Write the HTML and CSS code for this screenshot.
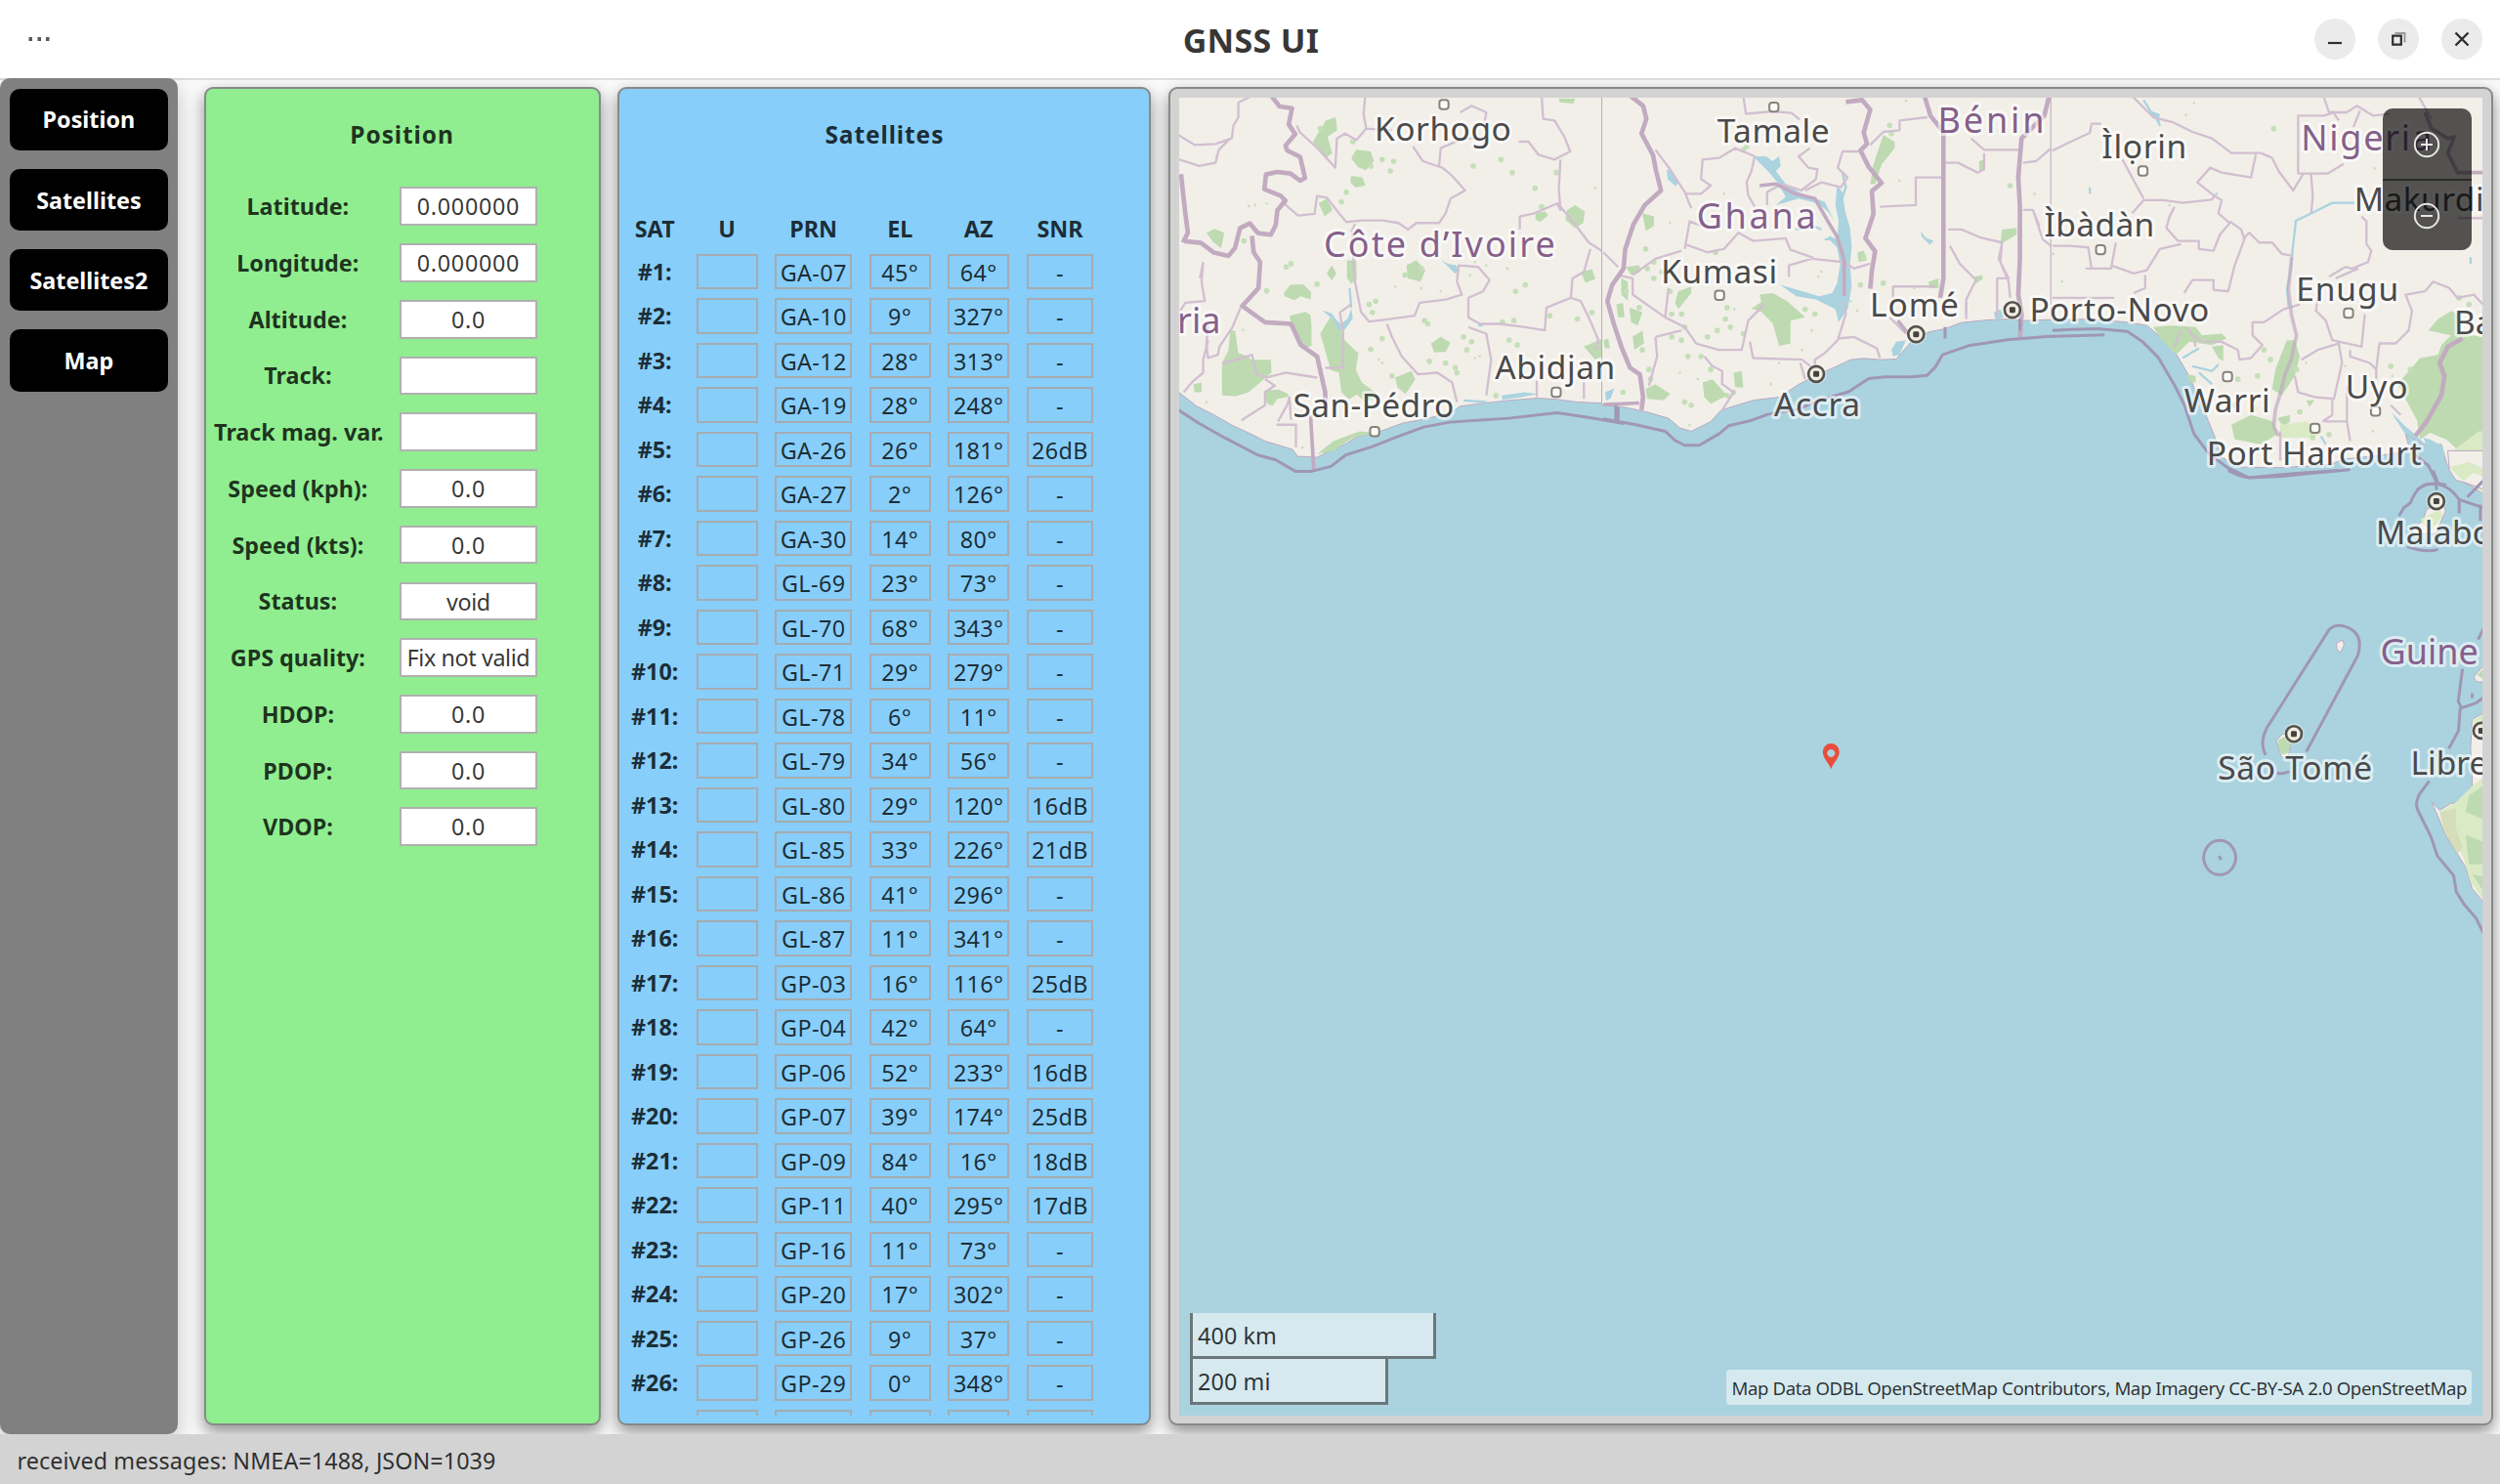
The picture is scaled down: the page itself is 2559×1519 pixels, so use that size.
FILE: index.html
```html
<!DOCTYPE html>
<html lang="en">
<head>
<meta charset="utf-8">
<title>GNSS UI</title>
<link rel="stylesheet" href="styles.css">
</head>
<body>
<header class="titlebar">
  <button class="menu" aria-label="Menu"><svg width="26" height="8" viewBox="0 0 26 8"><path d="M1.500 2h3.500v4H1.500zM10.500 2H14v4h-3.500zM19 2h3.500v4H19z" fill="#5a5a5a"/></svg></button>
  <h1>GNSS UI</h1>
  <div class="controls">
    <button aria-label="Minimize"><svg width="42" height="42"><path d="M14 25h14" stroke="#2f2f2f" stroke-width="2.200"/></svg></button>
    <button aria-label="Restore"><svg width="42" height="42"><path d="M15.200 17.700h8.600v9h-8.600z" fill="none" stroke="#2f2f2f" stroke-width="2.200"/><path d="M17.500 15h10v9.500" fill="none" stroke="#9b9b9b" stroke-width="2"/></svg></button>
    <button aria-label="Close"><svg width="42" height="42"><path d="M14.500 14.500l13 13m0-13l-13 13" stroke="#2f2f2f" stroke-width="2.400"/></svg></button>
  </div>
</header>
<main class="workspace">
  <nav class="sidebar">
    <button>Position</button>
    <button>Satellites</button>
    <button>Satellites2</button>
    <button>Map</button>
  </nav>
  <div class="panels">
    <section class="card position">
      <h2>Position</h2>
      <div class="fields">
        <b>Latitude:</b><span class="num">0.000000</span>
        <b>Longitude:</b><span class="num">0.000000</span>
        <b>Altitude:</b><span class="num">0.0</span>
        <b>Track:</b><span></span>
        <b>Track mag. var.</b><span></span>
        <b>Speed (kph):</b><span class="num">0.0</span>
        <b>Speed (kts):</b><span class="num">0.0</span>
        <b>Status:</b><span>void</span>
        <b>GPS quality:</b><span>Fix not valid</span>
        <b>HDOP:</b><span class="num">0.0</span>
        <b>PDOP:</b><span class="num">0.0</span>
        <b>VDOP:</b><span class="num">0.0</span>
      </div>
    </section>
    <section class="card satellites">
      <h2>Satellites</h2>
      <div class="sat-head"><b>SAT</b><b>U</b><b>PRN</b><b>EL</b><b>AZ</b><b>SNR</b></div>
      <div class="sat-rows">
        <b>#1:</b><i></i><i>GA-07</i><i>45°</i><i>64°</i><i>-</i>
        <b>#2:</b><i></i><i>GA-10</i><i>9°</i><i>327°</i><i>-</i>
        <b>#3:</b><i></i><i>GA-12</i><i>28°</i><i>313°</i><i>-</i>
        <b>#4:</b><i></i><i>GA-19</i><i>28°</i><i>248°</i><i>-</i>
        <b>#5:</b><i></i><i>GA-26</i><i>26°</i><i>181°</i><i>26dB</i>
        <b>#6:</b><i></i><i>GA-27</i><i>2°</i><i>126°</i><i>-</i>
        <b>#7:</b><i></i><i>GA-30</i><i>14°</i><i>80°</i><i>-</i>
        <b>#8:</b><i></i><i>GL-69</i><i>23°</i><i>73°</i><i>-</i>
        <b>#9:</b><i></i><i>GL-70</i><i>68°</i><i>343°</i><i>-</i>
        <b>#10:</b><i></i><i>GL-71</i><i>29°</i><i>279°</i><i>-</i>
        <b>#11:</b><i></i><i>GL-78</i><i>6°</i><i>11°</i><i>-</i>
        <b>#12:</b><i></i><i>GL-79</i><i>34°</i><i>56°</i><i>-</i>
        <b>#13:</b><i></i><i>GL-80</i><i>29°</i><i>120°</i><i>16dB</i>
        <b>#14:</b><i></i><i>GL-85</i><i>33°</i><i>226°</i><i>21dB</i>
        <b>#15:</b><i></i><i>GL-86</i><i>41°</i><i>296°</i><i>-</i>
        <b>#16:</b><i></i><i>GL-87</i><i>11°</i><i>341°</i><i>-</i>
        <b>#17:</b><i></i><i>GP-03</i><i>16°</i><i>116°</i><i>25dB</i>
        <b>#18:</b><i></i><i>GP-04</i><i>42°</i><i>64°</i><i>-</i>
        <b>#19:</b><i></i><i>GP-06</i><i>52°</i><i>233°</i><i>16dB</i>
        <b>#20:</b><i></i><i>GP-07</i><i>39°</i><i>174°</i><i>25dB</i>
        <b>#21:</b><i></i><i>GP-09</i><i>84°</i><i>16°</i><i>18dB</i>
        <b>#22:</b><i></i><i>GP-11</i><i>40°</i><i>295°</i><i>17dB</i>
        <b>#23:</b><i></i><i>GP-16</i><i>11°</i><i>73°</i><i>-</i>
        <b>#24:</b><i></i><i>GP-20</i><i>17°</i><i>302°</i><i>-</i>
        <b>#25:</b><i></i><i>GP-26</i><i>9°</i><i>37°</i><i>-</i>
        <b>#26:</b><i></i><i>GP-29</i><i>0°</i><i>348°</i><i>-</i>
        <b></b><i></i><i></i><i></i><i></i><i></i>
      </div>
    </section>
    <section class="card map-card">
      <div class="map">
        <svg class="chart" viewBox="1205.400 98.300 1335 1349.500" preserveAspectRatio="none">
          <defs>
            <g id="town"><circle r="16" fill="#fff" opacity=".5"/><rect x="-14" y="-14" width="28" height="28" rx="9" fill="#fbfaf7" stroke="#85837a" stroke-width="6"/></g>
            <g id="capital"><circle r="32" fill="#fff" opacity=".35"/><circle r="24" fill="#efece3" stroke="#55534b" stroke-width="8"/><rect x="-9" y="-9" width="18" height="18" rx="4" fill="#45433c"/></g>
          </defs>

          <!-- Côte d'Ivoire and Liberia -->
          <g transform="translate(1180 80) scale(.33333)">
            <path class="land" d="M60 40H1445V1002L1380 994 1300 990 1237 982 1180 978 1090 985 1000 995 940 1003 915 1020 850 1038 760 1056 700 1078 620 1098 590 1118 540 1140 500 1160 440 1157 425 1136 340 1110 290 1085 240 1062 180 1028 130 1003 60 948Z"/>
            <path class="wood" d="M510 780l30-50 30 15 10 50 25 25 22 20-8 50 18 40 45 32-8 20-30 5-22-20-25 15-22-22-8-60-25-8ZM208 870l20-40 5-60 15 0 10 70 30 10 10 10h60l2 40-70 60-40 12-42-2ZM415 725l50-12 15 10 3 40 0 55-30 8-25-50ZM398 655l20-25 40-2 24 25-2 22-30-10-20 12-30-12ZM605 240l15-25 45 5 10 30-25 28-25-10ZM160 470l25-12 30 12-10 48-25-20ZM592 555h28l2 60-18 12-12-18ZM740 915l50-20 12 25-30 45-25-20ZM530 595l15-25 15 25-15 22ZM605 295l35 5 8 25-30 5-16-15ZM338 955l45-3 30 15-5 8-30 5-15 22-18-8ZM505 380l25-15 18 35-25 20ZM1268 400l25-15 30 20-5 35-25 15-30-25ZM775 570l30-15 28 30-15 35-40-10ZM487 190l40-65 30-10 5 40-30 20 15 50-20 15ZM1320 820l70-30 5 50-40 20ZM500 1150l50-40 80-30 50 5-70 15-60 40ZM120 935l25-5 0 30-22 0ZM1310 590l35-8 10 30-30 12ZM850 810l30-20 30 18-15 28-35 2ZM1243 58h50l-5 15-42-4ZM1172 410l30-5 8 12-25 20-14-8Z"/>
            <path class="specks s14" d="M405 575h0M420 565h0M345 648h0M500 628h0M665 265h0M700 245h0M725 280h0M735 250h0M590 345h0M575 375h0M610 190h0M510 150h0M980 265h0M1065 245h0M1100 285h0M1170 333h0M1235 285h0M1190 390h0M1110 650h0M1140 630h0M1105 740h0M1070 745h0M1215 725h0M1345 715h0M1300 735h0M1090 800h0M1115 815h0M660 690h0M680 680h0M670 715h0M830 740h0M840 750h0M665 828h0M700 795h0M845 865h0M895 870h0M925 885h0M930 900h0M975 805h0M960 830h0M275 495h0M1430 700h0M1430 640h0M1425 620h0M730 910h0M950 790h0M1360 810h0M1050 970h0M770 600h0M820 580h0"/>
            <path class="specks s6" d="M190 235h0M310 385h0M345 380h0M272 768h0M290 388h0M1355 332h0M1020 570h0M985 560h0M970 600h0M1085 580h0M740 635h0M820 640h0M880 650h0M690 860h0M700 870h0M985 855h0M1000 850h0M160 990h0M270 1045h0M1385 395h0M1200 530h0M455 1130h0"/>
            <path class="lake" d="M882 555l20 10 25 5 12 20-15 5-20-20ZM515 708l30 10 25 35 25-20 10-30 5 30-25 35-20 0-20-35ZM1385 960l30-15-5 25-18 15ZM1068 970l70-10 40 5-50 10-60 8Z"/>
            <path class="river" d="M600 640l5 60M555 990l30 0M950 985l70 5M1010 755h-15"/>
            <path class="adm" d="M70 167l53 33 65-3 50-17 5-40 15-25 0-45 40-20M70 243l68 22 50-10 10-40 35-35M648 50l-5 55 8 45-30 35-35-20-25 15-5 90-55-60-55-50-8-20M650 150l80 5M795 205l30 45 60 20 30 25 40 45-45 25-15 45-20 30-70 0-25 20-30-20-50-8-60 0-50 5-25-30-35-45-30-5-8 55-50 5-30-25-20-20M940 100l35-20 45 20-5 30M875 265l5-55 70-30 70 0M1120 190h30l30 40 50 15 48-25-18-45-30-50-35-5-5-70M1248 245l-5 90 5 65-10-20-70 30-45 10 0 40M1240 380l50 60 45 60 55 35 45 40M1340 520l-20 70-35 20-5 60 30 10 25 50 30 70-10 30M1280 670l-75 30-5 70-60-10-80-10-60 0-35-20 0-60 45-20 20-35-35-40-60-5-5 50 15 40-50 15-80 10-15 40-40 5-60 8-40 5-25-30-20-100-8-150 10-20M715 750l15 40 30 60 50 55 60-5 45 30 15 60M965 760l55 20 15 80-15 110M525 885l55 0 0-110-10-60 35-25M150 560l-5 60 10 60-60 5-15 25M150 560l-10 50M265 700l-25 60-40 60-5 25-30 10-5-40 5-60M165 800l-15 60 0 40-35 30-25 30M210 870l60-15 30-10 15 60 30 10 60-15 95 15M340 920l30 20-30 20 0 40-70 45M380 1050l30-55 5-20 5 70M375 1060h60l0 70M1175 975v-50M1320 980v-50"/>
            <path class="state" d="M360 50l25 32 38 5-10 50 20 30-30 35 5 15 40 20 15 65-15 8-30-22-40-5-35 8-5 45 50 20 15 15-25 30-5 45-15 30-40-5-25-30-30 15-15 60-20 25-45-10-40-30-50-5M82 290l13 120 8 60-15 30M300 480l5 50 20 30-5 80-50 55 70 50 80 5 30 65 50 35 25 110 0 50"/>
            <path class="state thin" d="M480 1030l10 170M1440 570l-38 60-10 50 15 70 33 100"/>
            <path class="sea" d="M70 1012l68 44 80 45 100 52 55 15 60 35h50l60-15 45-35 80-25 70-28 90-33 80-15 180-12 150-17 100 15 105 18M1425 1045v-45"/>
          </g>

          <!-- Ghana, Togo and Benin -->
          <g transform="translate(1640 80) scale(.33333)">
            <path class="land" d="M-5 40H1445V734L1290 740 1250 735 1180 738 1100 746 1050 765 1000 775 950 800 900 858 850 860 800 856 760 860 700 888 660 905 600 936 540 975 460 985 400 1003 360 1017 330 1050 270 1080 235 1070 200 1040 130 1020 60 1005-5 1000Z"/>
            <path class="wood" d="M480 660l40-5 45 25 55 50-45 10 0 70-35 8-20-70-35-35-30-10 30-20ZM70 575l40-5 5 20-30 10ZM55 610l20 10 0 60-20-20ZM40 690l20-5 5 45-20 0ZM80 700l40 15-15 40-20-10ZM130 950l30-15 45 30-20 20-50-5ZM305 930l30-10 45 50-50 25-20-20ZM90 790l30-20 5 40-30 20ZM230 650l40-15 0 20-40 50-10-20ZM860 170l35 20 0 20-40 50-20 60-15 0 10-60ZM1225 460l45-5 0 20-50 30ZM1000 620l30-10 0 30-30 0ZM780 530l20-5 10 30-25 5ZM400 900l25-5 5 50-25 0ZM1140 605l25-5 0 12-20 15ZM1155 250l15-5 0 35-15 0ZM120 410l35 10 0 30-25 15ZM0 800l15-5 5 30-15 0Z"/>
            <path class="specks s14" d="M430 215h0M440 205h0M130 520h0M135 580h0M155 560h0M155 610h0M180 590h0M205 650h0M345 530h0M240 720h0M250 760h0M210 720h0M240 800h0M210 790h0M320 790h0M350 770h0M375 735h0M380 700h0M390 760h0M430 780h0M650 720h0M620 705h0M300 850h0M330 890h0M260 850h0M140 890h0M145 920h0M250 990h0M270 1000h0M400 960h0M380 970h0M790 630h0M860 625h0M1250 325h0M880 140h0M885 165h0M800 545h0M110 700h0M70 650h0M120 830h0M60 960h0"/>
            <path class="specks s6" d="M370 350h0M205 440h0M930 65h0M910 310h0M670 590h0M660 605h0M750 690h0M760 680h0M640 770h0M610 830h0M780 710h0M955 640h0M1410 620h0M1325 350h0M540 870h0M1410 630h0M515 935h0M265 1060h0M290 920h0M235 900h0"/>
            <path class="lake" d="M735 345l8 60 15 50 5 60-5 50 5 70-12 70-28 40-10-40-60-30-60-10-50-35 70 20 50 15 40-10 15-30 10-60-10-50-30-30 10-5 20 15 5-60-10-50 5-60ZM460 235l40 0 20 15 20-15 5 30-15 15 30 40 50 30 70 25 30 60-20-30-30-25-60-15-70 20 30-25-25-45-25-30ZM195 275l20 10 15 30-8 12-25-22ZM885 830l15-25 30-5-20 45-20 5ZM975 465l15 20 25 10-12 12-25-25ZM1200 715l20-10 10 25-25 10ZM5 960l28-12-10 30-15 8Z"/>
            <path class="river" d="M735 290l10 40-20 60M590 460l60-10 20 10M680 490h40M1115 720v-35M400 705h5"/>
            <path class="adm" d="M160 215l45 60 45 70 20 50M250 350h50l30-25-30-20 5-60 50-5 50-30 60 25-10 45-15 35 5 40 20 35M430 50l8 55 80-8 60 5 25 20M635 210l-35 25 30 35 28 5-5 30-45 35-60-20-45 25 0 40M620 340l50-25 60 15 20-30-30-30 15-50 50 0M250 520l15-85 40 15M250 505l70 25 50-10 45-50 45 25 100-8 15 35 70 25M45 600l45 10 0 50 50 35 50 35 60 30 35 50 70 20 70 0 20-90 50-50M90 600l70-50 80-25M570 605l0-35 70-20 100 10 30 20 50-15M740 680l5 40-25 80-40 40-30 20 0 30-40-30-150-5-10-50M720 795l50-5 70 35 10 30M620 920l-15-50M310 850l25 30 30 15 0 40 35 25-35 55M200 640l-10 90M160 790l80-20M160 790l5 60-25 90M850 390l110-5 0-85h80M820 200l40-40 50-5 0-30 85-10M1130 180l40 35h110M1050 255l40 0 60 30 20-10v-50M1060 460l40 0 60 25 65 15-10 50 30 60-35 0 0 120M1065 510l30 55 50 50-30 60 0 60M1225 500l-5 60 25 60 5 50M890 670v-35l130 0M1290 255l40-5 40-35 70-25M1290 400l30 0 10 30 20 60 50 40 40-20M1320 400l20 50M1380 670h60M0 530l45 45M880 730l50 50"/>
            <path class="state" d="M84 50l38 30 10 40-15 45 35 65 10 50 15 60-50 45-35 60-25 75-5 60-35 50-15 50 20 70 25 75 25 60 30 20 10 70-5 40M745 68l50-6 25 30-20 70 10 35-20 20 25 50 40 50-30 25 5 70-25 75 30 40-10 60-5 55M987 50l18 60 40 50 0 450-10 60M1370 50l-15 60-30 30-40 40-10 120 5 90 0 160-5 110 10 60-5 80"/>
            <path class="state thin" d="M480 325l50-5 60 30 60 15 40 70 30 50 20 70 0 110"/>
            <path class="state thin" d="M0 998l110-5M905 740l35 45"/>
            <path class="sea" d="M0 1042l100 18 90 20 30 28 30 15h45l60-35 30-25 65-15 55-20 90-15 60-25 100-30 60-40 50-5h80l50-5 25-25 22-38 80-28 120-18 120-10 178-5M38 1045v-45M1050 795v-35M1280 770v-35"/>
          </g>

          <!-- Nigeria -->
          <g transform="translate(2100 80) scale(.33333)">
            <path class="land" d="M-5 40H1335V1280L1290 1250 1235 1222 1212 1180 1195 1120 1150 1122 1120 1108 1085 1090 1100 1140 1000 1155 900 1165 850 1182 700 1192 580 1190 520 1160 500 1100 480 1050 450 980 420 910 385 850 350 805 290 755 230 745 120 735-5 738Z"/>
            <path class="wood" d="M310 760l50-5 80 5 20 25 60-5 15 15-45 20-70-10-40 40-40-40ZM1155 770l30-35 40-25 20 10-5 60 90 10V1160l-70-10-50-45-50-20-30 20-10-60-60-110 70-80 55-10 10-30 30-30ZM720 800l25 0 15 50-15 60-40 60-30-20 10-60ZM550 1060l60-30 70 20 10 40-50 30-80-15ZM690 1040l40-10 0 20-20 15ZM490 820l35-5 0 50-15-10ZM780 985l25 0-15 20ZM415 905l25 5 0 20-20 0Z"/>
            <path class="scrub" d="M1230 1140l80-60 25 0v195l-90-60ZM1215 1180l40-30 40 50-20 30ZM700 1060l80-10 50 30-30 20-100 0Z"/>
            <path class="specks s14" d="M680 150h0M650 830h0M670 860h0M750 890h0M630 910h0M570 920h0M540 980h0M1250 670h0M1280 690h0M1100 890h0M1040 880h0M560 1000h0M620 1010h0M800 1100h0M850 1090h0M760 1020h0"/>
            <path class="specks s6" d="M410 108h0M435 72h0M990 272h0M360 385h0M30 620h0M1045 910h0M900 880h0M985 1080h0M610 1030h0M780 870h0"/>
            <path class="river" d="M280 62l25 40 20 20 5 20M930 378h-70l-70 35-42 20-10 90-5 60-12 60 5 60M500 350h8M400 855l50-30M430 880l60 15 20-20M450 900l40 35M825 1095l15 25M115 330v20M1285 545v20M5 535h-5"/>
            <path class="lake" d="M1040 1020l45 45 30 25 30 30-60-30ZM300 95l30 10-5 30ZM1140 1100l20 5 40 20 10 70-50-40Z"/>
            <path class="adm" d="M0 218l50-25 65-30 5-28 30 0M245 50l65 65 60 15 60 30 60 20 60 45h90l35 15 20 40 45 60 30-50M755 290V110h80l30-10M755 288h90l50-30M833 50l17 50 55 0 30-20 50 30 50-5M860 95l20 30M945 95l-20 50M1125 50l40 70M625 230l-15 70-90-15-35-15-40 45 50 40 25 15-10 40 35 30-30 35-20 50-45-5 0-25-65 0-35-40 10-35 15-30M245 410l35-40 60 0 60 8 90-10 10-15M545 435l35 25 10 30-30 80-20 80-45-5v-30l-65 0-25 40M585 490l20-20 30 30 40 0 30 35 30 5M215 245l65 120M0 510l50 0 60 5 10 65-15 0h75l15-80M180 570l70 25 40-10 40-65 65-15M285 600l0 40-35 15M795 290l5 70-5 50M950 420l15 15 0 70 15 20-10 35-50 20-20-5-50 30M870 610l70-30M815 670l-5 40 30 30 20 60 90 20 10-100M760 690l-50 15-60 40-35 0 0 40 30 30-35 40-35 5-5-30-50-25-60 0-30-20-20-25M765 860l50-30 65-20 10 60-25 110-60-5-50-15-10-50M830 1050l30-20 0-50M835 1050h70l0-110M905 1050l10 60M915 830l0 20 60 20 20 20 10-80 50 0 40-40 10-60-20-50 60-10 25-30 50 20 25 30 50-10 35 38M995 890v30M1040 1000l30 30M395 770l-20 50M435 800l5 20M1245 425h80M1300 285h30M0 670h190M700 1170V1080M1310 1200v-20"/>
            <path class="state thin faint" d="M735 545l-10 100 10 80 15 60-15 70-20 50-15 60-15 50-5 50 15 30"/>
            <path class="state" d="M1260 795l-45 25-25 50 15 40-10 60-45 80-35 45"/>
            <path class="state thin" d="M1145 100l20 50 50 30 20-5-20 50 30 60 85 0"/>
            <path class="sea" d="M0 770l60-3 80-2 90 8 45 30 50 50 50 85 30 60 30 90 45 60 60 45 65 30 100-5 80-8 130-12M1105 1145l50 40 25 50 0 25M1120 1260q40-30 90-15"/>
          </g>

          <!-- Gulf of Guinea islands and Gabon -->
          <g transform="translate(2100 480) scale(.33333)">
            <path class="land" d="M1215-60h120V62l-60-22-35-10-20-30ZM1165 1018l25 27 35-22 30 0 35-48 0-50-5-70 5-90 45-25V1340l-45-55-20-65-65-105-15-40ZM1150 120l50-20 8 25-30 70-60 0-15-10 35-30ZM688 830l20-20 20 5 5 20-10 50-20-5ZM1295 635l35-42v57h-27ZM873 530l20-8 3 15-10 22-12-8Z"/>
            <path class="scrub" d="M1220-10l60-15 53 23v24l-40-14-30 25ZM1190 1050l50-30 50-50 43-35v400l-50-75-20-70ZM1130 150l60-30 10 20-40 50ZM1290 770l40-25v65Z"/>
            <path class="wood" d="M1280 1000l50-35v110l-60-25ZM1270 1120l60 25v65l-50 0ZM1290 1240l40 12v50ZM692 830l20-12 22 15-14 45-20-8ZM1305 630l25-28v43Z"/>
            <path class="dry" d="M1190 1050l50-10 0 60 20 60-15 20-40-70Z"/>
            <path class="sea" d="M540 0q40 22 70 22l130-12 140-10M1170 0l15 40M1065 140l15-25 20-15q20-50 50-58h35q40 10 65 48l75 25M1250 92v40M1275 82l55-56M1315 105v50M1090 235q60 20 95 8M1328 480l-20 40M1260 610l-5 40-8 60 10 20 45-15 28-20M1253 730l-5 70-30 55M1158 955l-30 40q-15 30-5 50l40 80 20 60 50 60 8 50 25 40 35 40 30 60"/>
            <path class="sea" d="M655 875q-20-40 5-85L850 490q20-20 50-10 60 20 38 90L780 865M690 930q20 5 38-5M514 1137a49 53 0 1 0 .1 0ZM512 1185l6 12M1290 685v15"/>
          </g>

          <g transform="scale(.33333)">
            <use href="#town" x="4430" y="316"/><use href="#town" x="4217" y="1321"/><use href="#town" x="4775" y="1200"/>
            <use href="#town" x="5444" y="324"/><use href="#town" x="5277" y="902"/><use href="#town" x="6578" y="520"/>
            <use href="#town" x="6448" y="762"/><use href="#town" x="7210" y="957"/><use href="#town" x="6838" y="1152"/>
            <use href="#town" x="7107" y="1311"/><use href="#town" x="7293" y="1258"/>
            <use href="#capital" x="5574" y="1144"/><use href="#capital" x="5881" y="1022"/><use href="#capital" x="6177" y="947"/>
            <use href="#capital" x="7480" y="1535"/><use href="#capital" x="7042" y="2250"/><use href="#capital" x="7618" y="2240"/>
          </g>

          <g class="city">
            <text x="1405.500" y="142.500" textLength="140">Korhogo</text>
            <text x="1322" y="426" textLength="165">San-Pédro</text>
            <text x="1529" y="386.500" textLength="123">Abidjan</text>
            <text x="1756.500" y="144.500" textLength="115">Tamale</text>
            <text x="1699" y="288.500" textLength="119">Kumasi</text>
            <text x="1913" y="322.500" textLength="91">Lomé</text>
            <text x="1815" y="424.500" textLength="88">Accra</text>
            <text x="2076.500" y="327" textLength="184">Porto-Novo</text>
            <text x="2150.500" y="160" textLength="87">Ìlọrin</text>
            <text x="2091.500" y="240.500" textLength="113">Ìbàdàn</text>
            <text x="2409" y="214" textLength="133">Makurdi</text>
            <text x="2349.500" y="306.500" textLength="105">Enugu</text>
            <text x="2511.500" y="340">Ba</text>
            <text x="2235" y="420.500" textLength="88">Warri</text>
            <text x="2400" y="406.500" textLength="64">Uyo</text>
            <text x="2258" y="474.500" textLength="220">Port Harcourt</text>
            <text x="2431.500" y="555.500" textLength="119">Malabo</text>
            <text x="2269.500" y="796.500" textLength="158">São Tomé</text>
            <text x="2467" y="791.500">Libre</text>
          </g>
          <g class="country">
            <text x="1353.500" y="261.500" textLength="237">Côte d’Ivoire</text>
            <text x="1203.500" y="339.500">ria</text>
            <text x="1735.500" y="232.500" textLength="122">Ghana</text>
            <text x="1982.500" y="134.500" textLength="109">Bénin</text>
            <text x="2354.500" y="152.500" textLength="134">Nigeria</text>
            <text x="2436" y="678.500">Guine</text>
          </g>

          <path d="M1873.200 786c-2-6-8.500-11-8.500-17.700a8.500 8.500 0 0 1 17 0c0 6.700-6.500 11.700-8.500 17.700Zm0-20.200a4 4 0 1 0 .01 0Z" fill="#ea4d3c" fill-rule="evenodd"/>
        </svg>
        <div class="zoom">
          <button aria-label="Zoom in"><svg width="28" height="28"><circle cx="14" cy="14" r="12.200"/><path d="M14 8v12M8 14h12"/></svg></button>
          <button aria-label="Zoom out"><svg width="28" height="28"><circle cx="14" cy="14" r="12.200"/><path d="M8 14h12"/></svg></button>
        </div>
        <div class="scale"><span class="km">400 km</span><span class="mi">200 mi</span></div>
        <div class="credit">Map Data ODBL OpenStreetMap Contributors, Map Imagery CC-BY-SA 2.0 OpenStreetMap</div>
      </div>
    </section>
  </div>
</main>
<footer class="status">received messages: NMEA=1488, JSON=1039</footer>
</body>
</html>
```
FILE: styles.css
```css
* { box-sizing: border-box; }
body {
  margin: 0;
  width: 2559px;
  height: 1519px;
  display: flex;
  flex-direction: column;
  overflow: hidden;
  background: #fafafa;
  color: rgba(0, 0, 0, .8);
  font: 23.33px/32px "Noto Sans", "Open Sans", sans-serif;
}
button { border: 0; padding: 0; background: none; font: inherit; color: inherit; }
h1, h2 { margin: 0; }
svg { display: block; }

.titlebar {
  height: 80px;
  flex: none;
  display: grid;
  grid-template-columns: 1fr auto 1fr;
  align-items: center;
  padding: 0 18px 0 20px;
  background: #fff;
}
.titlebar h1 { font-size: 34px; line-height: 44px; font-weight: 700; letter-spacing: .3px; padding-top: 1px; }
.menu { justify-self: start; padding-left: 8px; }
.controls { display: flex; justify-content: flex-end; gap: 23px; }
.controls button { width: 42px; height: 42px; border-radius: 50%; background: #ebebeb; }

.workspace {
  height: 1388px;
  flex: none;
  display: flex;
  overflow: hidden;
  background: #fafafa;
  box-shadow: inset 0 2px #dedede;
}
.sidebar {
  width: 182px;
  flex: none;
  display: flex;
  flex-direction: column;
  gap: 19px;
  padding: 10.6px 10.5px 10.6px 10.3px;
  border-radius: 10px;
  background: #808080;
  box-shadow: 0 8px 24px rgba(0, 0, 0, .22);
}
.sidebar button {
  height: 63.3px;
  border-radius: 10px;
  background: #000;
  color: #fff;
  font-weight: 700;
}
.panels { flex: 1; display: flex; gap: 17.800px; padding: 9.400px 7.500px 9.500px 26.600px; }
.card {
  border: 2px solid #878a87;
  border-radius: 9px;
  box-shadow: 0 8px 16px rgba(0, 0, 0, .3), 0 4px 16px rgba(0, 0, 0, .16);
}
.card h2 { font-size: 24.500px; line-height: 32px; font-weight: 700; text-align: center; letter-spacing: .9px; }
.position { width: 406px; background: #90ee90; }
.position h2 { margin: 31px 0 37px; }
.fields {
  display: grid;
  grid-template-columns: 171.500px 140.500px;
  grid-auto-rows: 39.670px;
  gap: 18.080px 18.600px;
  padding-left: 8.500px;
  align-items: center;
  text-align: center;
}
.fields b { white-space: nowrap; }
.fields span {
  height: 100%;
  border: 2px solid #b0b0b0;
  background: #fff;
  line-height: 37px;
  letter-spacing: -.4px;
  white-space: nowrap;
}
.fields .num { letter-spacing: .7px; }

.satellites { width: 546px; background: #87cefa; display: flex; flex-direction: column; padding-bottom: 7.500px; }
.satellites h2 { margin-top: 31px; }
.sat-head, .sat-rows {
  display: grid;
  grid-template-columns: 50px 63px 79px 63px 63px 68.500px;
  column-gap: 17.500px;
  padding-left: 10.800px;
  text-align: center;
}
.sat-head { margin-top: 64px; height: 41.200px; }
.sat-rows {
  flex: 1;
  min-height: 0;
  grid-auto-rows: 36.750px;
  row-gap: 8.750px;
  overflow: hidden;
}
.sat-rows b { line-height: 36px; }
.sat-rows i {
  font-style: normal;
  border: 2px solid #a6abb0;
  line-height: 35px;
  letter-spacing: .4px;
  white-space: nowrap;
}

.map-card { flex: 1; padding: 8.600px 8.700px 8px; background: #d3d3d3; }
.map { position: relative; height: 100%; background: #aad3df; overflow: hidden; }
.chart { width: 100%; height: 100%; }
.land { fill: #f2efe9; stroke: #b9a9c0; stroke-width: 3; }
.wood { fill: #bddab1; }
.scrub { fill: #d9eac4; }
.dry { fill: #d5ddb9; }
.lake { fill: #aad3df; }
.river { fill: none; stroke: #aad3df; stroke-width: 7; }
.adm, .state, .sea { fill: none; stroke-linejoin: round; }
.adm { stroke: #d2bfd0; stroke-width: 7; }
.state { stroke: #c2abc0; stroke-width: 14; }
.thin { stroke-width: 11; }
.faint { opacity: .7; }
.sea { stroke: #a096b5; stroke-width: 9; }
.specks { stroke: #c5dfb9; stroke-linecap: round; }
.s14 { stroke-width: 17; }
.s6 { stroke-width: 8; }
.city, .country { stroke: rgba(255, 255, 255, .6); stroke-width: 6px; stroke-linejoin: round; paint-order: stroke; font-weight: 450; }
.city { font-size: 33.500px; fill: #4a4a4a; }
.country { font-size: 36px; fill: #85608a; }

.zoom {
  position: absolute;
  top: 10.700px;
  right: 10.700px;
  width: 91px;
  height: 145px;
  border-radius: 10px;
  overflow: hidden;
  background: rgba(0, 0, 0, .66);
}
.zoom button { display: flex; width: 100%; height: 72px; align-items: center; justify-content: center; padding-right: 2px; }
.zoom button:first-child { height: 74px; padding-top: 3px; border-bottom: 2px solid rgba(0, 0, 0, .5); }
.zoom svg { fill: none; stroke: #e6e6e6; stroke-width: 2; }
.scale { position: absolute; left: 10.700px; bottom: 10.700px; display: flex; flex-direction: column; align-items: flex-start; }
.scale span {
  height: 47px;
  border: 3px solid #6c777b;
  border-top: 0;
  padding-left: 5.500px;
  line-height: 46px;
  letter-spacing: .1px;
  background: rgba(255, 255, 255, .5);
}
.km { width: 252px; }
.mi { width: 203px; }
.credit {
  position: absolute;
  right: 10.700px;
  bottom: 10.500px;
  height: 36px;
  padding: 0 5px 0 6px;
  border-radius: 4px;
  background: rgba(255, 255, 255, .5);
  font-size: 18.600px;
  line-height: 37px;
  letter-spacing: -.4px;
  white-space: nowrap;
}
.status { flex: 1; padding: 11px 17.500px; letter-spacing: .07px; background: #d3d3d3; }
```
